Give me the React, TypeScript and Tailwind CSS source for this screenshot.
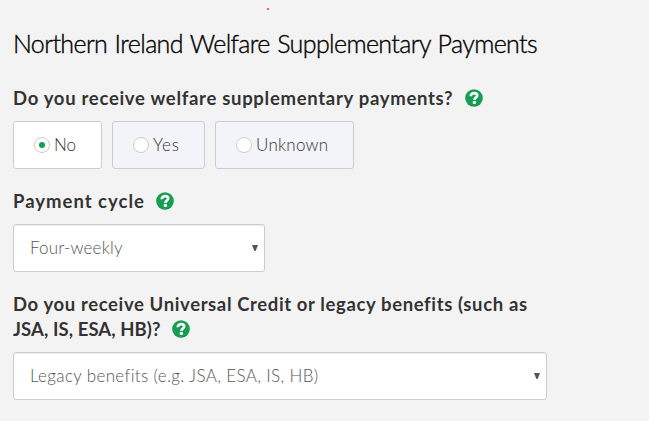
import React, { useState } from 'react'

const HelpIcon = () => (
  <svg viewBox="0 0 18 18" className="mb-px h-[18px] w-[18px] shrink-0" aria-label="Help">
    <circle cx="9" cy="9" r="8.8" fill="#179d51" />
    <path d="M5.7 7.3C5.7 5.1 7.1 4.1 9.1 4.1C11.1 4.1 12.2 5.1 12.2 6.6C12.2 8.6 9.4 8.5 9.4 10.9" fill="none" stroke="#fff" strokeWidth="2.6" />
    <rect x="7.8" y="12.1" width="3.1" height="2.7" fill="#fff" />
  </svg>
)

type RadioProps = {
  label: string
  checked: boolean
  onSelect: () => void
  className: string
}

const RadioBox = ({ label, checked, onSelect, className }: RadioProps) => (
  <label className={`flex h-12 items-center gap-1 rounded-[3px] border border-[#cccdd0] pl-5 ${checked ? 'bg-white' : 'bg-[#f3f4f9]'} ${className}`}>
    <input type="radio" name="supplementary" checked={checked} onChange={onSelect} className="sr-only" />
    <span className="flex h-4 w-4 shrink-0 items-center justify-center rounded-full border border-[#cccccc] bg-white">
      {checked && <span className="h-1.5 w-1.5 rounded-full bg-[#179d51]" />}
    </span>
    <span className="whitespace-nowrap text-[17px] font-light leading-6 text-[#333]">{label}</span>
  </label>
)

const SelectBox = ({ options, className }: { options: string[]; className: string }) => (
  <div className={`grid h-12 items-center rounded-[3px] border border-[#cccccc] bg-white shadow-[inset_0_1px_1px_rgba(0,0,0,0.075)] ${className}`}>
    <select className="col-start-1 row-start-1 h-full w-full appearance-none bg-transparent pl-4 pr-6 text-[17px] font-light text-[#555] outline-none">
      {options.map((option) => (
        <option key={option}>{option}</option>
      ))}
    </select>
    <svg viewBox="0 0 6 6" className="pointer-events-none col-start-1 row-start-1 mr-1.5 h-1.5 w-1.5 justify-self-end">
      <path d="M0 0H6L3.6 6H2.4Z" fill="#555" />
    </svg>
  </div>
)

const App = () => {
  const [answer, setAnswer] = useState('No')

  return (
    <div className="min-h-screen overflow-hidden bg-[#f3f3f3] pl-[13px] font-['Lato',sans-serif]">
      <div className="flex h-7 pl-[254px] pt-2">
        <span className="h-[2px] w-[2px] rounded-full bg-[#f03040]" />
      </div>
      <h1 className="mb-7 h-[30px] whitespace-nowrap text-[25px] font-light leading-[30px] tracking-[-0.62px] text-black [-webkit-text-stroke:0.35px_black] [word-spacing:1.2px]">
        Northern Ireland Welfare Supplementary Payments
      </h1>

      {/* Supplementary payments */}
      <div className="flex h-[25px] items-center whitespace-nowrap text-[18.5px] font-bold leading-[25px] text-[#333]">
        <span className="w-[452px] tracking-[0.7px]">Do you receive welfare supplementary payments?</span>
        <HelpIcon />
      </div>
      <div className="mt-2.5 flex gap-2.5">
        <RadioBox label="No" checked={answer === 'No'} onSelect={() => setAnswer('No')} className="w-[89px]" />
        <RadioBox label="Yes" checked={answer === 'Yes'} onSelect={() => setAnswer('Yes')} className="w-[93px] tracking-[0.8px]" />
        <RadioBox label="Unknown" checked={answer === 'Unknown'} onSelect={() => setAnswer('Unknown')} className="w-[139px] tracking-[0.25px]" />
      </div>

      {/* Payment cycle */}
      <div className="mt-5 flex h-[25px] items-center whitespace-nowrap text-[18.5px] font-bold leading-[25px] text-[#333]">
        <span className="w-[143px] tracking-[1px]">Payment cycle</span>
        <HelpIcon />
      </div>
      <SelectBox options={['Four-weekly', 'Weekly']} className="mt-2.5 w-[252px] tracking-[0.2px]" />

      {/* Universal Credit / legacy benefits */}
      <div className="mt-5 whitespace-nowrap text-[18.5px] font-bold leading-[25px] text-[#333]">
        <div className="tracking-[0.62px]">Do you receive Universal Credit or legacy benefits (such as</div>
        <div className="flex h-[25px] items-center">
          <span className="w-[159px] tracking-[0.08px]">JSA, IS, ESA, HB)?</span>
          <HelpIcon />
        </div>
      </div>
      <SelectBox options={['Legacy benefits (e.g. JSA, ESA, IS, HB)', 'Universal Credit']} className="mt-2.5 w-[534px] tracking-[0.35px]" />
    </div>
  )
}

export default App
